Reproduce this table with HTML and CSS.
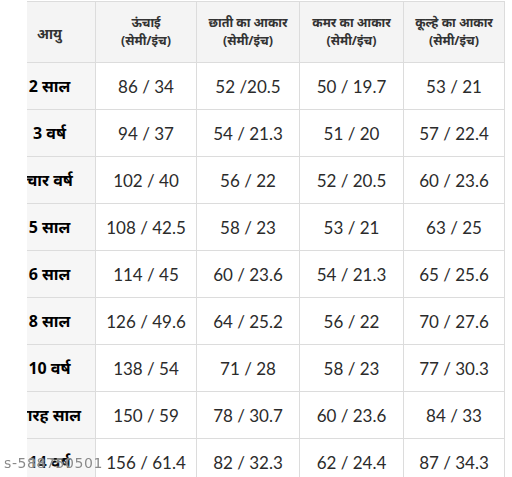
FILE: index.html
```html
<!DOCTYPE html>
<html lang="hi">
<head>
  <meta charset="UTF-8"/>
  <meta name="viewport" content="width=device-width,initial-scale=1.0"/>
  <title>साइज़ चार्ट</title>
  <link rel="stylesheet" href="styles.css">
</head>
<body>
  <div class="frame">
    <table class="size-table">
      <colgroup>
        <col class="c-age"><col class="c-h"><col class="c-chest"><col class="c-waist"><col class="c-hip">
      </colgroup>
      <thead>
        <tr>
          <th>आयु</th>
          <th>ऊंचाई<br>(सेमी/इंच)</th>
          <th>छाती का आकार<br>(सेमी/इंच)</th>
          <th>कमर का आकार<br>(सेमी/इंच)</th>
          <th>कूल्हे का आकार<br>(सेमी/इंच)</th>
        </tr>
      </thead>
      <tbody>
        <tr><th>2 साल</th><td>86 / 34</td><td>52 /20.5</td><td>50 / 19.7</td><td>53 / 21</td></tr>
        <tr><th>3 वर्ष</th><td>94 / 37</td><td>54 / 21.3</td><td>51 / 20</td><td>57 / 22.4</td></tr>
        <tr><th>चार वर्ष</th><td>102 / 40</td><td>56 / 22</td><td>52 / 20.5</td><td>60 / 23.6</td></tr>
        <tr><th>5 साल</th><td>108 / 42.5</td><td>58 / 23</td><td>53 / 21</td><td>63 / 25</td></tr>
        <tr><th>6 साल</th><td>114 / 45</td><td>60 / 23.6</td><td>54 / 21.3</td><td>65 / 25.6</td></tr>
        <tr><th>8 साल</th><td>126 / 49.6</td><td>64 / 25.2</td><td>56 / 22</td><td>70 / 27.6</td></tr>
        <tr><th>10 वर्ष</th><td>138 / 54</td><td>71 / 28</td><td>58 / 23</td><td>77 / 30.3</td></tr>
        <tr><th>बारह साल</th><td>150 / 59</td><td>78 / 30.7</td><td>60 / 23.6</td><td>84 / 33</td></tr>
        <tr><th>14 वर्ष</th><td>156 / 61.4</td><td>82 / 32.3</td><td>62 / 24.4</td><td>87 / 34.3</td></tr>
      </tbody>
    </table>
  </div>
  <div class="sku">s-588750501</div>
</body>
</html>
```

FILE: styles.css
```css
:root {
  --line: #dcdcdc;
  --head: #f4f4f4;
  --side: #f6f6f6;
  --text: #2b2b2b;
}
* { box-sizing: border-box; }
html, body { height: 100%; }
body {
  margin: 0;
  background: #fff;
  color: var(--text);
  font-family: 'Lato', 'Noto Sans', sans-serif;
  overflow: hidden;
}

.frame {
  margin-left: 27px;
  width: 478px;
  height: 477px;
  overflow: hidden;
}

.size-table {
  margin: 1px 0 0 -24px;
  border-collapse: collapse;
  table-layout: fixed;
  width: 501px;
}
.c-age { width: 92px; }
.c-h { width: 101px; }
.c-chest { width: 103px; }
.c-waist { width: 104px; }
.c-hip { width: 101px; }

.size-table th, .size-table td {
  border: 1px solid var(--line);
  text-align: center;
  padding: 0;
  white-space: nowrap;
}

.size-table thead th {
  height: 61px;
  background: var(--head);
  font-family: 'Noto Sans', sans-serif;
  font-size: 12.5px;
  font-weight: 700;
  line-height: 18px;
  color: #333;
}
.size-table thead th:first-child { font-size: 14px; padding-top: 4px; }

.size-table tbody tr { height: 47px; }
.size-table tbody th {
  background: var(--side);
  font-family: 'Noto Sans', sans-serif;
  font-size: 16px;
  font-weight: 700;
  color: #000;
}
.size-table td {
  font-size: 17px;
  color: var(--text);
}

.sku {
  position: fixed;
  left: 4px;
  bottom: 6px;
  font-family: 'DejaVu Sans', sans-serif;
  font-size: 14px;
  color: #8a8a8a;
  letter-spacing: 0.6px;
  text-shadow: 0 0 2px #fff;
}
```
